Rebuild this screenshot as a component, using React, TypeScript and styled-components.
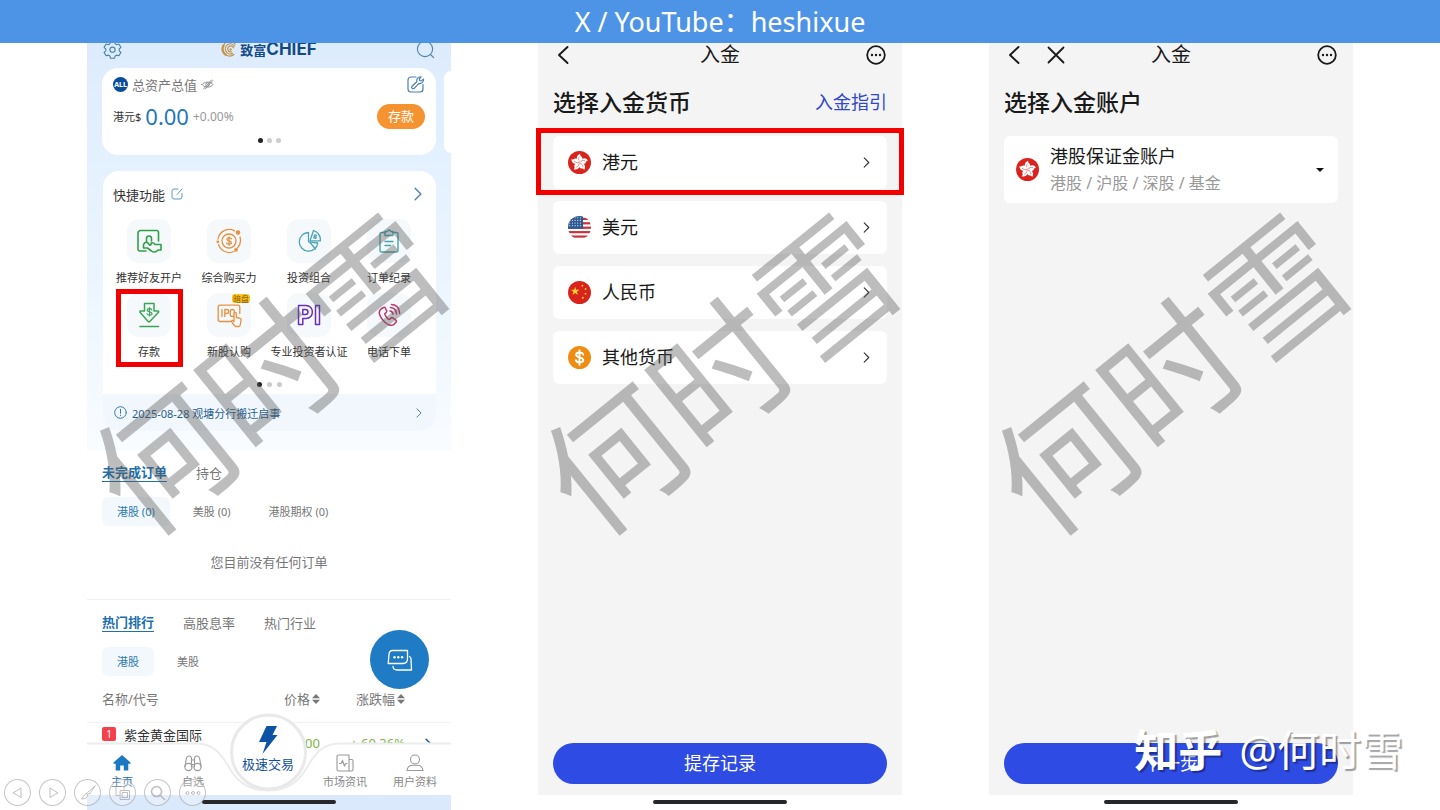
import React from "react";
import styled, { createGlobalStyle, css } from "styled-components";

const GlobalStyle = createGlobalStyle`
  *, *::before, *::after { box-sizing: border-box; }
  body {
    margin: 0;
    background: #fff;
    color: #333;
    font-family: "Noto Sans", "Noto Sans CJK SC", sans-serif;
  }
  button {
    border: 0;
    padding: 0;
    background: none;
    color: inherit;
    font: inherit;
    cursor: pointer;
  }
  a { color: inherit; text-decoration: none; }
  h1, h2, p, ul { margin: 0; padding: 0; font-weight: inherit; }
  ul { list-style: none; }
  svg { display: block; flex: none; }
`;

/* ---------- slide ---------- */

const Slide = styled.div`
  position: relative;
  display: flex;
  flex-direction: column;
  height: 100vh;
  overflow: hidden;
`;

const Banner = styled.header`
  display: flex;
  align-items: center;
  justify-content: center;
  height: 43px;
  flex: none;
  background: #4d94e6;
  color: #fff;
  font-size: 27px;
  line-height: 43px;
  z-index: 1;
`;

const Phones = styled.main`
  display: flex;
  flex: 1;
  min-height: 0;
  justify-content: space-evenly;
`;

const Phone = styled.section`
  position: relative;
  display: flex;
  flex-direction: column;
  width: 364px;
  min-height: 0;
`;

const Screen = styled.div<{ $grey?: boolean }>`
  position: relative;
  display: flex;
  flex-direction: column;
  flex: 1;
  min-height: 0;
  background: ${(p) => (p.$grey ? "#f4f4f4" : "#fff")};
`;

const HomeArea = styled.div<{ $tint?: boolean }>`
  display: flex;
  justify-content: center;
  height: 15px;
  flex: none;
  padding-top: 5px;
  background: ${(p) => (p.$tint ? "#dbe9fc" : "#fff")};
`;

const HomeBar = styled.div`
  width: 134px;
  height: 4px;
  border-radius: 2px;
  background: #26272b;
`;

const Watermark = styled.span`
  position: absolute;
  left: 49%;
  top: 325px;
  transform: translate(-50%, -50%) rotate(-39deg);
  font-family: "Noto Sans CJK SC", sans-serif;
  font-size: 136px;
  line-height: 136px;
  white-space: nowrap;
  color: rgba(89, 89, 89, 0.4);
  pointer-events: none;
  z-index: 3;
`;

const RedFrame = styled.span<{ $wide?: boolean }>`
  position: absolute;
  border: 5px solid #f20000;
  inset: ${(p) => (p.$wide ? "-8px -17px -6px" : "-4px 6px 0 7px")};
  pointer-events: none;
`;

/* ---------- home screen ---------- */

const Scroll = styled.div`
  flex: 1;
  min-height: 0;
  overflow: hidden;
`;

const Hero = styled.div`
  padding: 0 15px 19px;
  background: linear-gradient(#dcebfc, #e6f2ff 40%, #f9fcff);
`;

const BrandBar = styled.div`
  display: flex;
  align-items: center;
  justify-content: space-between;
  height: 38px;
  margin-top: -13px;
  padding: 0 1px;
`;

const Brand = styled.div`
  display: flex;
  align-items: center;
  gap: 3px;
  color: #124a86;
  font-size: 13px;
  font-weight: 700;
  line-height: 18px;
`;

const BrandLatin = styled.span`
  font-family: Inter, sans-serif;
  font-size: 17px;
`;

const AssetCards = styled.div`
  position: relative;
  margin-bottom: 16px;
`;

const AssetCard = styled.div`
  height: 87px;
  padding: 6px 11px 0;
  border-radius: 16px;
  background: #fff;
`;

const NextCard = styled.div`
  position: absolute;
  top: 3px;
  right: -15px;
  width: 7px;
  height: 82px;
  border-radius: 12px 0 0 12px;
  background: #fff;
`;

const Line = styled.div<{ $h: number; $gap?: number }>`
  display: flex;
  align-items: center;
  gap: ${(p) => p.$gap ?? 4}px;
  height: ${(p) => p.$h}px;
`;

const Push = styled.span`
  margin-left: auto;
  display: flex;
`;

const AllBadge = styled.span`
  display: flex;
  align-items: center;
  justify-content: center;
  width: 15px;
  height: 15px;
  border-radius: 50%;
  background: #0a4c9c;
  color: #fff;
  font-size: 7px;
  font-weight: 700;
`;

const Text = styled.span<{ $size: number; $color: string }>`
  font-size: ${(p) => p.$size}px;
  color: ${(p) => p.$color};
  white-space: nowrap;
`;

const DepositButton = styled.button`
  width: 48px;
  height: 25px;
  border-radius: 13px;
  background: #f59330;
  color: #fff;
  font-size: 13px;
  line-height: 24px;
`;

const Dots = styled.div<{ $gap: number }>`
  display: flex;
  justify-content: center;
  gap: ${(p) => p.$gap}px;
  height: 5px;
  span {
    width: 5px;
    height: 5px;
    border-radius: 50%;
    background: #ccc;
  }
  span:first-child { background: #222; }
`;

const QuickCard = styled.div`
  margin-left: 1px;
  padding-top: 12px;
  border-radius: 16px;
  background: #fff;
  overflow: hidden;
`;

const QuickTitle = styled(Line)`
  padding: 0 14px 2px 10px;
  margin-bottom: 12px;
`;

const QuickGrid = styled.div`
  display: grid;
  grid-template-columns: repeat(4, 1fr);
  padding: 0 7px 0 6px;
  margin-bottom: 15px;
`;

const QuickCell = styled.button`
  position: relative;
  display: flex;
  flex-direction: column;
  align-items: center;
  gap: 7px;
  height: 74px;
  font-size: 11px;
  line-height: 16px;
  white-space: nowrap;
`;

const Tile = styled.span`
  display: flex;
  align-items: center;
  justify-content: center;
  width: 44px;
  height: 44px;
  border-radius: 12px;
  background: #f5f9fc;
`;

const HotTag = styled.span`
  position: absolute;
  top: 1px;
  left: 43px;
  padding: 0 1px;
  border-radius: 3px;
  background: #fbc61d;
  color: #8a5300;
  font-size: 8px;
  line-height: 9px;
`;

const Notice = styled.a`
  display: flex;
  align-items: center;
  gap: 5px;
  height: 37px;
  margin-top: 7px;
  padding: 0 14px 0 11px;
  background: #f1f7fc;
  color: #28608f;
  font-size: 11px;
`;

const Block = styled.section<{ $ruled?: boolean }>`
  padding: 14px 15px 0;
  ${(p) => p.$ruled && css`border-bottom: 1px solid #f2f2f2; height: 150px;`}
`;

const Tabs = styled.div`
  display: flex;
  gap: 29px;
  height: 20px;
  margin-bottom: 13px;
`;

const Tab = styled.button<{ $on?: boolean }>`
  height: 18px;
  font-size: 13px;
  line-height: 17px;
  color: #777;
  ${(p) => p.$on && css`
    color: #1d6fae;
    font-weight: 700;
    border-bottom: 1px solid #1d6fae;
  `}
`;

const Pills = styled.div`
  display: flex;
  gap: 8px;
`;

const Pill = styled.button<{ $on?: boolean }>`
  height: 29px;
  padding: 0 15px;
  border-radius: 6px;
  font-size: 11px;
  line-height: 29px;
  color: ${(p) => (p.$on ? "#2a7ab0" : "#777")};
  background: ${(p) => (p.$on ? "#f2f8fb" : "transparent")};
`;

const Empty = styled.p`
  margin-top: 26px;
  text-align: center;
  font-size: 13px;
  line-height: 20px;
  color: #777;
`;

const Quotes = styled.table`
  width: 100%;
  table-layout: fixed;
  border-collapse: collapse;
  font-size: 13px;
  th {
    height: 46px;
    padding: 0;
    border-bottom: 1px solid #f2f2f2;
    color: #777;
    font-weight: 400;
    text-align: right;
    white-space: nowrap;
  }
  td {
    height: 42px;
    padding: 0;
    text-align: right;
    color: #7cb342;
  }
  th:first-child, td:first-child {
    width: 163px;
    padding-left: 15px;
    text-align: left;
    color: #333;
  }
  th:first-child { color: #777; }
  th:nth-child(2) { width: 70px; }
  th:nth-child(3) { width: 85px; }
  td:last-child { padding: 4px 18px 0 0; }
`;

const Sortable = styled.span`
  display: inline-flex;
  align-items: center;
  gap: 2px;
`;

const Security = styled.div`
  display: flex;
  align-items: center;
  gap: 8px;
  margin-bottom: 18px;
`;

const Rank = styled.span`
  width: 14px;
  height: 14px;
  border-radius: 2px;
  background: #f5404c;
  color: #fff;
  font-size: 10px;
  line-height: 14px;
  text-align: center;
`;

const Chat = styled.button`
  position: absolute;
  right: 22px;
  bottom: 106px;
  display: flex;
  align-items: center;
  justify-content: center;
  width: 59px;
  height: 59px;
  border-radius: 50%;
  background: #1f7cc4;
`;

const NavBar = styled.nav`
  position: absolute;
  inset: auto 0 0;
  height: 80px;
`;

const NavShape = styled.svg`
  position: absolute;
  inset: 0;
  overflow: visible;
`;

const NavItems = styled.div`
  position: relative;
  display: grid;
  grid-template-columns: 70fr 72fr 78fr 76fr 64fr;
  align-items: end;
  height: 80px;
  padding: 0 4px 4px 0;
`;

const NavItem = styled.a<{ $on?: boolean; $trade?: boolean }>`
  display: flex;
  flex-direction: column;
  align-items: center;
  gap: 1px;
  color: ${(p) => (p.$on ? "#1b6bb0" : "#888")};
  font-size: 11px;
  line-height: 18px;
  white-space: nowrap;
  ${(p) => p.$trade && css`
    color: #10509a;
    font-size: 13px;
    padding-bottom: 18px;
  `}
`;

/* ---------- deposit screens ---------- */

const TitleBar = styled.div`
  display: grid;
  grid-template-columns: 1fr auto 1fr;
  align-items: center;
  height: 24px;
  padding: 0 16px;
  color: #1a1a1a;
`;

const BarSide = styled.div<{ $end?: boolean }>`
  display: flex;
  gap: 24px;
  justify-content: ${(p) => (p.$end ? "flex-end" : "flex-start")};
`;

const BarTitle = styled.h1`
  font-size: 20px;
  line-height: 24px;
`;

const Heading = styled.div`
  display: flex;
  align-items: center;
  justify-content: space-between;
  height: 32px;
  margin: 18px 15px 19px;
`;

const HeadingText = styled.h2`
  color: #1a1a1a;
  font-size: 23px;
  font-weight: 500;
`;

const GuideLink = styled.a`
  color: #3048cf;
  font-size: 18px;
`;

const Options = styled.ul`
  display: grid;
  gap: 12px;
  margin: 0 15px;
`;

const OptionItem = styled.li`
  position: relative;
`;

const Option = styled.button<{ $tall?: boolean }>`
  display: flex;
  align-items: center;
  gap: 11px;
  width: 100%;
  height: ${(p) => (p.$tall ? 67 : 53)}px;
  padding: ${(p) => (p.$tall ? "0 14px 0 12px" : "0 17px 0 15px")};
  border-radius: 6px;
  background: #fff;
  color: #1a1a1a;
  font-size: 18px;
  text-align: left;
`;

const OptionName = styled.span`
  padding-bottom: 3px;
`;

const TwoLines = styled.span`
  display: grid;
  line-height: 27px;
`;

const Primary = styled.button`
  height: 41px;
  margin: auto 15px 11px;
  border-radius: 21px;
  background: #2e4be4;
  color: #fff;
  font-size: 18px;
  line-height: 41px;
`;

/* ---------- overlays on the slide ---------- */

const Signature = styled.div`
  position: absolute;
  right: 37px;
  bottom: 36px;
  display: flex;
  align-items: center;
  gap: 17px;
  color: #fff;
  font-size: 42px;
  line-height: 48px;
  text-shadow: 2px 2px 1px rgba(0, 0, 0, 0.36);
  white-space: nowrap;
  z-index: 4;
  strong { font-size: 44px; font-weight: 700; }
`;

const ShowControls = styled.div`
  position: absolute;
  left: 4px;
  bottom: 4px;
  display: flex;
  gap: 8px;
  z-index: 4;
`;

const ShowButton = styled.button`
  display: flex;
  align-items: center;
  justify-content: center;
  width: 27px;
  height: 27px;
  border: 1px solid rgba(150, 150, 150, 0.55);
  border-radius: 50%;
  background: rgba(255, 255, 255, 0.25);
`;

/* ---------- drawings ---------- */

type IconProps = {
  w: number;
  h?: number;
  box: string;
  color?: string;
  sw?: number;
  children: React.ReactNode;
};

const Icon = ({ w, h, box, color = "currentColor", sw = 1, children }: IconProps) => (
  <svg width={w} height={h ?? w} viewBox={box} fill="none" stroke={color} strokeWidth={sw}
    strokeLinecap="round" strokeLinejoin="round" aria-hidden="true">
    {children}
  </svg>
);

const Chevron = ({ w = 7, h = 12, color = "#333" }) => (
  <Icon w={w} h={h} box="0 0 7 12" color={color} sw={1.2}><path d="M1 1l5 5-5 5" /></Icon>
);

const More = () => (
  <Icon w={20} box="0 0 20 20" sw={1.8}>
    <circle cx="10" cy="10" r="8.800" />
    <g fill="currentColor" stroke="none">
      <circle cx="6" cy="10" r="1.200" /><circle cx="10" cy="10" r="1.200" /><circle cx="14" cy="10" r="1.200" />
    </g>
  </Icon>
);

const Back = () => (
  <Icon w={18} h={20} box="0 0 18 20" sw={1.9}><path d="M13.500 2L5 10l8.500 8" /></Icon>
);

const Close = () => (
  <Icon w={18} h={20} box="0 0 18 20" sw={1.8}><path d="M1.500 2.500l15 15m0-15l-15 15" /></Icon>
);

const Gear = () => (
  <Icon w={19} box="0 0 19 19" color="#4a82b0" sw={1.1}>
    <path d="M7.500 1.500h4l.6 2.300 1.500.9 2.300-.7 2 3.400-1.700 1.600v1.800l1.700 1.600-2 3.400-2.300-.7-1.500.9-.6 2.300h-4l-.6-2.300-1.500-.9-2.300.7-2-3.400 1.700-1.600V9L1.100 7.400l2-3.400 2.300.7 1.500-.9z" />
    <circle cx="9.500" cy="9.700" r="2.600" />
  </Icon>
);

const Search = () => (
  <Icon w={19} box="0 0 19 19" color="#4a82b0" sw={1.1}>
    <circle cx="9" cy="9" r="7.600" /><path d="M14.500 14.500l3.200 3.200" />
  </Icon>
);

const GoldMark = () => (
  <Icon w={16} box="0 0 16 16" color="#c39448" sw={1.2}>
    <path d="M14 3A7.200 7.200 0 1 0 13 13.600M13.600 5.200A5 5 0 1 0 11.500 12.400M12.500 6.800A3 3 0 1 0 10.500 10.800" />
    <path d="M2.500 4.500A7 7 0 0 0 4.500 13.500" strokeWidth="2.400" />
    <circle cx="9.600" cy="8.400" r=".6" />
  </Icon>
);

const EyeOff = () => (
  <Icon w={13} h={11} box="0 0 13 11" color="#888" sw={0.9}>
    <path d="M1 5.500C3 2.500 10 2 12 5.500 10 9 3 9 1 5.500zM2.500 10l8-9M4.300 10l7.500-8.500" />
    <circle cx="6.500" cy="5.600" r="1.800" />
  </Icon>
);

const EditTool = () => (
  <Icon w={18} box="0 0 18 18" color="#4a82b0" sw={1.2}>
    <path d="M9 2H4a3 3 0 0 0-3 3v9a3 3 0 0 0 3 3h9a3 3 0 0 0 3-3V9.500" />
    <path d="M5 11.300l4.800-4.600c-.7-2.700 1.200-5.200 4.300-4.900l-1.800 2.200.4 1.500 1.600.4 2.200-1.800c.4 2.900-2 5-4.600 4.300l-4.600 4.900c-1.500 1.200-3.500-.6-2.300-2z" />
  </Icon>
);

const EditNote = () => (
  <Icon w={12} box="0 0 12 12" color="#5a9ac8" sw={1}>
    <path d="M7 1H3a2 2 0 0 0-2 2v6a2 2 0 0 0 2 2h6a2 2 0 0 0 2-2V5.500M6 6.500L11 1" />
  </Icon>
);

const InviteIcon = () => (
  <Icon w={26} box="0 0 26 26" color="#2fa046" sw={1.6}>
    <path d="M10 23H3.500A1.800 1.800 0 0 1 2 21.300V5a2.500 2.500 0 0 1 2.500-2.500H21A1.600 1.600 0 0 1 22.500 4v9" />
    <path d="M10.500 13.500v-3a2.500 2.500 0 0 1 5 0V13M7.500 20v-2.500c0-2 1.500-3.500 3.600-3.200l2.700 2.900c1.200 0 1.600-1 1.200-2.200 1.500-.5 3.200.2 4.200 1.500H25v5.500h-3c-1.800 2.300-4.600 2.700-6.500 1l-4-3M7.500 20h3" />
  </Icon>
);

const PowerIcon = () => (
  <Icon w={26} box="0 0 26 26" color="#e8913f" sw={1.3}>
    <path d="M18.500 2.800A11.400 11.400 0 0 0 2 11M2.500 16.500a11.400 11.400 0 0 0 15.500 7M24 9a11.400 11.400 0 0 1-2.500 11" />
    <circle cx="13" cy="13" r="7" />
    <path d="M15.400 10.800c-.5-1.300-4.500-1.500-4.500.5 0 2.200 4.500 1 4.500 3.300 0 2.100-4.300 2-4.800.4M13 8.800v8.400" />
    <g fill="#e8913f"><circle cx="22" cy="4.500" r="1.700" /><circle cx="1.800" cy="13.800" r=".7" /><circle cx="20" cy="21.800" r="1.200" /></g>
  </Icon>
);

const PieIcon = () => (
  <Icon w={24} box="0 0 24 24" color="#4aa6b5" sw={1.3}>
    <path d="M11.500 3.500a9.300 9.300 0 1 0 9.300 10.500l-9.300-1.200z" />
    <path d="M16.500 1.500l-3.500 10.300h10.500c0-5.500-3-9-7-10.300zM13 13.500l5.500 6.500" />
    <path d="M19.600 6.500c-1.300-1-3-.3-2.300.8l1.700.8c.8 1.300-1.300 1.700-2.300.7" />
  </Icon>
);

const OrderIcon = () => (
  <Icon w={24} box="0 0 24 24" color="#46a3a8" sw={1.4}>
    <path d="M8 3.500H4.500A1.500 1.500 0 0 0 3 5v16.500A1.500 1.500 0 0 0 4.500 23h15a1.500 1.500 0 0 0 1.500-1.500V5a1.500 1.500 0 0 0-1.500-1.500H16" />
    <path d="M8 2.500h2.500a1.500 1.500 0 0 1 3 0H16v4H8zM8 12.500h8M8 16.500h5.500" />
  </Icon>
);

const DepositIcon = () => (
  <Icon w={24} h={26} box="0 0 24 26" color="#3aa653" sw={1.5}>
    <path d="M7.500 1.500h9.500V9h4c.7 0 .9.700.5 1.200l-8.700 9.300c-.5.500-1.100.5-1.600 0L3 10.200c-.4-.5-.2-1.200.5-1.200h4zM3 24.500h18.500" />
    <path d="M14.800 7.800c-.4-1.600-4.600-1.600-4.600.4 0 2.100 4.900 1.100 4.900 3.400 0 2-4.500 2-5 .2M12.500 5.500v8.500" strokeWidth="1.200" />
  </Icon>
);

const IpoIcon = () => (
  <Icon w={26} box="0 0 26 26" color="#e8913f" sw={1.3}>
    <path d="M14.500 19.500H4A1.800 1.800 0 0 1 2.200 17.700V5A1.800 1.800 0 0 1 4 3.200h18A1.800 1.800 0 0 1 23.800 5v6.500" />
    <path d="M6 7.500v7M8.800 14.500v-7h2c2.600 0 2.600 3.800 0 3.800h-2" />
    <rect x="14.200" y="7.500" width="4.200" height="7" rx="2" />
    <path d="M18 19.500v-8c0-1.500 2.300-1.500 2.300 0v4l3.800.9c.9.300 1.200 1 1 1.800l-.9 5c-.2.900-.7 1.300-1.500 1.300h-3.200c-1.600-1.400-2.700-3-4-5.200.5-1.500 1.600-1 2.500.2z" fill="#f5f9fc" />
  </Icon>
);

const PiIcon = () => (
  <Icon w={24} h={22} box="0 0 24 22" color="#6a2fc0" sw={1.5}>
    <path d="M1.500 20.500v-19h7.300c8.800 0 8.800 13 0 13H5.800v6zM5.800 5.500v5h2.700c3.300 0 3.300-5 0-5zM18.500 1.500h4v19h-4z" />
  </Icon>
);

const PhoneIcon = () => (
  <Icon w={24} box="0 0 24 24" color="#c2356a" sw={1.5}>
    <path d="M6.500 4.500L4.200 5.800c-2.500 2-2.500 6 1.400 11 4 5 8.500 6.500 11.500 4.500l2-2.300c.5-.7.300-1.400-.3-1.900l-3-2.200c-.8-.5-1.400-.3-2 .3l-1.300 1.400c-2-.7-4.300-3.700-4.800-5.800l1.500-1.300c.6-.5.700-1.100.3-1.800L8.200 4.800c-.4-.6-1-.8-1.700-.3zM13 8c1.700.2 2.700 1.300 3 3M13.500 4.500c3.500.3 5.800 2.600 6 6.500M14.500 1.500c5 .4 8 3.700 8.200 9" />
  </Icon>
);

const InfoIcon = () => (
  <Icon w={13} box="0 0 13 13" color="#3477ab" sw={1}>
    <circle cx="6.500" cy="6.500" r="5.800" /><path d="M6.500 3.300v4M6.500 9.200v.3" />
  </Icon>
);

const ChatIcon = () => (
  <Icon w={26} h={22} box="0 0 26 22" color="#fff" sw={1.3}>
    <path d="M5.500 1.500H20.500v8.300c0 3.200-1.500 4.700-4.500 4.700H1.200L2 5.500c.2-2.800 1.200-4 3.500-4z" />
    <path d="M22.500 7.500c1 .4 1.500 1.400 1.500 2.500l.5 11H10c-2.300 0-3.800-1-4-3.500" />
    <g fill="#fff" stroke="none"><circle cx="7.500" cy="8.200" r="1.200" /><circle cx="11.300" cy="8.200" r="1.200" /><circle cx="15.100" cy="8.200" r="1.200" /></g>
  </Icon>
);

const Sorter = () => (
  <svg width="8" height="10" viewBox="0 0 8 10" fill="#777" aria-hidden="true">
    <path d="M4 0l4 4.300H0zM4 10L0 5.700h8z" />
  </svg>
);

const HomeIcon = () => (
  <svg width="18" height="18" viewBox="0 0 18 18" fill="#1b78c2" aria-hidden="true">
    <path d="M9 1L.5 8.500c-.5.600 0 1.200.6 1.200h1.600V16.500h4.500v-5h3.600v5h4.500V9.700h1.600c.6 0 1.100-.6.600-1.200z" />
  </svg>
);

const WatchIcon = () => (
  <Icon w={18} box="0 0 18 18" color="#999" sw={1.1}>
    <circle cx="4.500" cy="13" r="3.600" /><circle cx="13.500" cy="13" r="3.600" />
    <path d="M.9 12.500L2.500 4c.4-2.400 4.500-2.800 5 0v9M17.100 12.500L15.500 4c-.4-2.400-4.500-2.800-5 0v9M7.500 6h3M7.500 10.500h3" />
  </Icon>
);

const NewsIcon = () => (
  <Icon w={18} box="0 0 18 18" color="#999" sw={1.1}>
    <path d="M2.500 1H13v16H2.500A1.500 1.500 0 0 1 1 15.500v-13A1.500 1.500 0 0 1 2.500 1zM13 5.500h2.500A1.500 1.500 0 0 1 17 7v8.500a1.500 1.500 0 0 1-1.500 1.500H13M3.500 9.500h1.700l1.300-3 2 5.500 1.200-2.500H11" />
  </Icon>
);

const UserIcon = () => (
  <Icon w={18} box="0 0 18 18" color="#999" sw={1.1}>
    <circle cx="9" cy="5.500" r="4.500" /><path d="M1 16.500c.5-3.500 2.500-5.300 5.300-5.300h5.400c2.800 0 4.800 1.800 5.300 5.300z" />
  </Icon>
);

const Bolt = () => (
  <svg width="22" height="28" viewBox="0 0 22 28" fill="#0d52a4" aria-hidden="true">
    <path d="M9.500 0H20l-4.500 9h5L5.500 28l4-12H2z" />
  </svg>
);

const HongKong = () => (
  <svg width="23" height="23" viewBox="0 0 24 24" aria-hidden="true">
    <circle cx="12" cy="12" r="12" fill="#d8241c" />
    {[0, 72, 144, 216, 288].map((a) => (
      <g key={a} transform={`rotate(${a} 12 12)`}>
        <path d="M12 12C8.200 9.600 8 4.500 12.800 2.800c-.6 1.400.2 2 1.200 2.900C15.800 7.700 14.500 10.600 12 12z" fill="#fff" />
        <path d="M12 11.500c-1.300-1.800-1.200-3.500-.2-5.500" stroke="#d8241c" strokeWidth=".5" fill="none" />
      </g>
    ))}
  </svg>
);

const America = () => (
  <svg width="23" height="23" viewBox="0 0 26 26" aria-hidden="true">
    <clipPath id="us"><circle cx="13" cy="13" r="13" /></clipPath>
    <g clipPath="url(#us)">
      <rect width="26" height="26" fill="#fff" />
      {[2, 7, 12, 17, 22].map((y) => <rect key={y} y={y} width="26" height="2.500" fill="#c9343c" />)}
      <rect width="17" height="14.500" fill="#2d5a92" />
      {[2, 5, 8, 11].map((y) => [2, 5, 8, 11, 14].map((x) => (
        <circle key={`${x}-${y}`} cx={x} cy={y} r=".7" fill="#d5e0ee" />
      )))}
    </g>
  </svg>
);

const China = () => (
  <svg width="23" height="23" viewBox="0 0 24 24" aria-hidden="true">
    <circle cx="12" cy="12" r="12" fill="#d8241c" />
    <g fill="#fbd02c">
      <path d="M7.500 6l1.100 3.200H12l-2.700 2 1 3.300-2.800-2-2.800 2 1-3.300-2.700-2h3.400z" />
      <circle cx="15" cy="5" r="1" /><circle cx="18.300" cy="8.300" r="1" />
      <circle cx="18.300" cy="13.300" r="1" /><circle cx="15.500" cy="17.500" r="1" />
    </g>
  </svg>
);

const Coin = () => (
  <svg width="23" height="23" viewBox="0 0 24 24" fill="none" stroke="#fff" strokeWidth="2" strokeLinecap="round" aria-hidden="true">
    <circle cx="12" cy="12" r="12" fill="#ee8d12" stroke="none" />
    <path d="M15.800 9c-.8-3-7.300-2.800-7.300.2 0 3.600 7.400 1.800 7.400 5.500 0 3.200-6.900 3.200-7.700.1M12 4.500v15" />
  </svg>
);

/* ---------- data ---------- */

const quick = [
  { label: "推荐好友开户", icon: <InviteIcon /> },
  { label: "综合购买力", icon: <PowerIcon /> },
  { label: "投资组合", icon: <PieIcon /> },
  { label: "订单纪录", icon: <OrderIcon /> },
  { label: "存款", icon: <DepositIcon />, framed: true },
  { label: "新股认购", icon: <IpoIcon />, tag: "暗盘" },
  { label: "专业投资者认证", icon: <PiIcon /> },
  { label: "电话下单", icon: <PhoneIcon /> },
];

const currencies = [
  { label: "港元", flag: <HongKong />, framed: true },
  { label: "美元", flag: <America /> },
  { label: "人民币", flag: <China /> },
  { label: "其他货币", flag: <Coin /> },
];

/* ---------- screens ---------- */

const HomeScreen = () => (
  <Phone>
    <Screen>
      <Scroll>
        <Hero>
          <BrandBar>
            <button aria-label="设置"><Gear /></button>
            <Brand><GoldMark /><span>致富<BrandLatin>CHIEF</BrandLatin></span></Brand>
            <button aria-label="搜索"><Search /></button>
          </BrandBar>
          <AssetCards>
            <AssetCard>
              <Line $h={20}>
                <AllBadge>ALL</AllBadge>
                <Text $size={13} $color="#777">总资产总值</Text>
                <EyeOff />
                <Push><EditTool /></Push>
              </Line>
              <Line $h={44}>
                <Text $size={11} $color="#333">港元$</Text>
                <Text $size={22} $color="#1f78bd">0.00</Text>
                <Text $size={12} $color="#999">+0.00%</Text>
                <Push><DepositButton>存款</DepositButton></Push>
              </Line>
              <Dots $gap={4}><span /><span /><span /></Dots>
            </AssetCard>
            <NextCard />
          </AssetCards>
          <QuickCard>
            <QuickTitle $h={24} $gap={6}>
              <Text $size={13} $color="#333">快捷功能</Text>
              <EditNote />
              <Push><Chevron w={8} h={14} color="#4a82b0" /></Push>
            </QuickTitle>
            <QuickGrid>
              {quick.map((q) => (
                <QuickCell key={q.label}>
                  <Tile>{q.icon}</Tile>
                  {q.label}
                  {q.tag && <HotTag>{q.tag}</HotTag>}
                  {q.framed && <RedFrame />}
                </QuickCell>
              ))}
            </QuickGrid>
            <Dots $gap={5}><span /><span /><span /></Dots>
            <Notice href="#notice">
              <InfoIcon />2025-08-28 观塘分行搬迁启事
              <Push><Chevron w={6} h={10} color="#4a82b0" /></Push>
            </Notice>
          </QuickCard>
        </Hero>
        <Block $ruled>
          <Tabs><Tab $on>未完成订单</Tab><Tab>持仓</Tab></Tabs>
          <Pills><Pill $on>港股 (0)</Pill><Pill>美股 (0)</Pill><Pill>港股期权 (0)</Pill></Pills>
          <Empty>您目前没有任何订单</Empty>
        </Block>
        <Block>
          <Tabs><Tab $on>热门排行</Tab><Tab>高股息率</Tab><Tab>热门行业</Tab></Tabs>
          <Pills><Pill $on>港股</Pill><Pill>美股</Pill></Pills>
        </Block>
        <Quotes>
          <thead>
            <tr>
              <th>名称/代号</th>
              <th><Sortable>价格<Sorter /></Sortable></th>
              <th><Sortable>涨跌幅<Sorter /></Sortable></th>
              <th aria-label="详情" />
            </tr>
          </thead>
          <tbody>
            <tr>
              <td><Security><Rank>1</Rank>紫金黄金国际</Security></td>
              <td>114.700</td>
              <td>+ 60.36%</td>
              <td><Line $h={14}><Push><Chevron w={8} h={14} color="#10509a" /></Push></Line></td>
            </tr>
          </tbody>
        </Quotes>
      </Scroll>
      <Chat aria-label="在线客服"><ChatIcon /></Chat>
      <NavBar>
        <NavShape width="364" height="80" viewBox="0 0 364 80" aria-hidden="true">
          <path d="M0 28.500H110C128 28.500 136 42 143 54 151 68 164 75.500 181 75.500S211 68 219 54C226 42 234 28.500 252 28.500H364V80H0z" fill="#fff" />
          <path d="M0 28.500H110C128 28.500 136 42 143 54 151 68 164 75.500 181 75.500S211 68 219 54C226 42 234 28.500 252 28.500H364" fill="none" stroke="#ececec" strokeWidth="2" />
          <circle cx="181.500" cy="37" r="37" fill="#fff" stroke="#e9e9e9" strokeWidth="3" />
        </NavShape>
        <NavItems>
          <NavItem href="#home" $on><HomeIcon />主页</NavItem>
          <NavItem href="#watch"><WatchIcon />自选</NavItem>
          <NavItem href="#trade" $trade><Bolt />极速交易</NavItem>
          <NavItem href="#news"><NewsIcon />市场资讯</NavItem>
          <NavItem href="#user"><UserIcon />用户资料</NavItem>
        </NavItems>
      </NavBar>
    </Screen>
    <HomeArea $tint><HomeBar /></HomeArea>
    <Watermark>何时雪</Watermark>
  </Phone>
);

const CurrencyScreen = () => (
  <Phone>
    <Screen $grey>
      <TitleBar>
        <BarSide><button aria-label="返回"><Back /></button></BarSide>
        <BarTitle>入金</BarTitle>
        <BarSide $end><button aria-label="更多"><More /></button></BarSide>
      </TitleBar>
      <Heading>
        <HeadingText>选择入金货币</HeadingText>
        <GuideLink href="#guide">入金指引</GuideLink>
      </Heading>
      <Options>
        {currencies.map((c) => (
          <OptionItem key={c.label}>
            <Option>
              {c.flag}
              <OptionName>{c.label}</OptionName>
              <Push><Chevron h={11} /></Push>
            </Option>
            {c.framed && <RedFrame $wide />}
          </OptionItem>
        ))}
      </Options>
      <Primary>提存记录</Primary>
    </Screen>
    <HomeArea><HomeBar /></HomeArea>
    <Watermark>何时雪</Watermark>
  </Phone>
);

const AccountScreen = () => (
  <Phone>
    <Screen $grey>
      <TitleBar>
        <BarSide>
          <button aria-label="返回"><Back /></button>
          <button aria-label="关闭"><Close /></button>
        </BarSide>
        <BarTitle>入金</BarTitle>
        <BarSide $end><button aria-label="更多"><More /></button></BarSide>
      </TitleBar>
      <Heading><HeadingText>选择入金账户</HeadingText></Heading>
      <Options>
        <OptionItem>
          <Option $tall aria-haspopup="listbox">
            <HongKong />
            <TwoLines>
              港股保证金账户
              <Text $size={16} $color="#999">港股 / 沪股 / 深股 / 基金</Text>
            </TwoLines>
            <Push>
              <svg width="8" height="4" viewBox="0 0 8 4" aria-hidden="true"><path d="M0 0h8L4 4z" fill="#111" /></svg>
            </Push>
          </Option>
        </OptionItem>
      </Options>
      <Primary>下一步</Primary>
    </Screen>
    <HomeArea><HomeBar /></HomeArea>
    <Watermark>何时雪</Watermark>
  </Phone>
);

const controls = [
  { label: "上一张", art: <path d="M11 3.500v9L3.500 8z" /> },
  { label: "下一张", art: <path d="M5 3.500v9L12.500 8z" /> },
  { label: "画笔", art: <path d="M15 1L7.500 7.500l1.500 1.500zM6.500 8.500L8 10c-1 3-3 4-6.500 4 1.500-1 2-4.500 5-5.500z" /> },
  { label: "所有幻灯片", art: <path d="M1 1.500h8v3M1 1.500v9h3M5.500 5.500h9v9h-9zM7.500 7.500h5v5h-5z" /> },
  { label: "放大", art: <path d="M6.500 1.500a5 5 0 1 0 .1 0zM10.500 10.500l4 4" strokeWidth="1.600" /> },
  { label: "更多选项", art: <path d="M1 8a1.500 1.500 0 1 0 3 0A1.500 1.500 0 1 0 1 8M6.500 8a1.500 1.500 0 1 0 3 0A1.500 1.500 0 1 0 6.500 8M12 8a1.500 1.500 0 1 0 3 0A1.500 1.500 0 1 0 12 8" /> },
];

export default function App() {
  return (
    <Slide>
      <GlobalStyle />
      <Banner>X / YouTube：heshixue</Banner>
      <Phones>
        <HomeScreen />
        <CurrencyScreen />
        <AccountScreen />
      </Phones>
      <Signature><strong>知乎</strong>@何时雪</Signature>
      <ShowControls>
        {controls.map((c) => (
          <ShowButton key={c.label} aria-label={c.label}>
            <Icon w={16} box="0 0 16 16" color="rgba(150,150,150,.6)">{c.art}</Icon>
          </ShowButton>
        ))}
      </ShowControls>
    </Slide>
  );
}
